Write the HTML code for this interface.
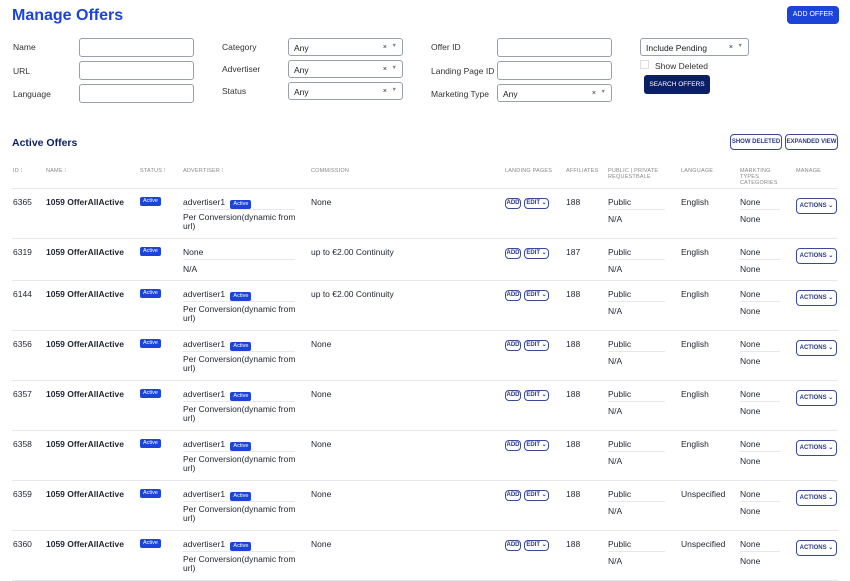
<!DOCTYPE html><html><head><meta charset="utf-8"><style>
*{box-sizing:border-box;margin:0;padding:0}
body{width:850px;height:581px;overflow:hidden;background:#fff;font-family:"Liberation Sans",sans-serif;color:#1f2430;position:relative;font-size:8.5px}
.a{position:absolute;white-space:nowrap}
.lbl{font-size:8.5px;color:#333}
.in{position:absolute;border:1px solid #9aa0ab;border-radius:3px;height:19px;width:115px;background:#fff}
.sel{position:absolute;border:1px solid #9aa0ab;border-radius:3px;height:18px;width:115px;font-size:8.5px;padding:4px 0 0 5px;color:#222}
.sel i{position:absolute;right:15px;top:5px;font-style:normal;font-size:7px}
.sel b{position:absolute;right:5px;top:4px;font-size:5.5px;color:#888;font-weight:normal}
.hd{position:absolute;top:168px;font-size:5.5px;color:#888;letter-spacing:.2px;line-height:6px}
.row{position:absolute;left:0;width:850px}
.row>div{position:absolute;white-space:nowrap}
.bd{border-top:1px solid #e6e8ee}
.bdg{background:#1c44d8;color:#fff;font-size:5.5px;border-radius:2px;padding:1px 3px;height:9px;line-height:7px;display:inline-block}
.ob{border:1px solid #3a4a9a;color:#2a3a86;border-radius:4px;font-size:6px;font-weight:bold;text-align:center;line-height:9px;height:11px}
.sep{height:1px;background:#e6e8ee}
.B{font-weight:bold}
</style></head><body>
<div class="a B" style="left:12px;top:7px;font-size:16px;color:#1c44d8">Manage Offers</div>
<div class="a" style="left:787px;top:6px;width:52px;height:18px;background:#1c44d8;border-radius:4px;color:#fff;font-size:7px;text-align:center;line-height:18px">ADD OFFER</div>
<div class="a lbl" style="left:13px;top:42px">Name</div>
<div class="a lbl" style="left:13px;top:66px">URL</div>
<div class="a lbl" style="left:13px;top:89px">Language</div>
<div class="in" style="left:79px;top:38px"></div>
<div class="in" style="left:79px;top:61px"></div>
<div class="in" style="left:79px;top:84px"></div>
<div class="a lbl" style="left:222px;top:42px">Category</div>
<div class="a lbl" style="left:222px;top:64px">Advertiser</div>
<div class="a lbl" style="left:222px;top:86px">Status</div>
<div class="sel" style="left:288px;top:38px">Any<i>×</i><b>▼</b></div>
<div class="sel" style="left:288px;top:60px">Any<i>×</i><b>▼</b></div>
<div class="sel" style="left:288px;top:82px">Any<i>×</i><b>▼</b></div>
<div class="a lbl" style="left:431px;top:42px">Offer ID</div>
<div class="a lbl" style="left:431px;top:66px">Landing Page ID</div>
<div class="a lbl" style="left:431px;top:89px">Marketing Type</div>
<div class="in" style="left:497px;top:38px"></div>
<div class="in" style="left:497px;top:61px"></div>
<div class="sel" style="left:497px;top:84px">Any<i>×</i><b>▼</b></div>
<div class="sel" style="left:640px;top:38px;width:109px">Include Pending<i>×</i><b>▼</b></div>
<div class="a" style="left:640px;top:60px;width:9px;height:9px;border:1px solid #ddd"></div>
<div class="a lbl" style="left:655px;top:61px">Show Deleted</div>
<div class="a" style="left:644px;top:75px;width:66px;height:19px;background:#0b1f66;border-radius:3px;color:#fff;font-size:6.5px;text-align:center;line-height:19px">SEARCH OFFERS</div>
<div class="a B" style="left:12px;top:137px;font-size:10.5px;color:#0b1f66">Active Offers</div>
<div class="a ob" style="left:730px;top:134px;width:52px;height:16px;line-height:14px">SHOW DELETED</div>
<div class="a ob" style="left:785px;top:134px;width:53px;height:16px;line-height:14px">EXPANDED VIEW</div>
<div class="hd" style="left:13px">ID ⁝</div>
<div class="hd" style="left:46px">NAME ⁝</div>
<div class="hd" style="left:140px">STATUS ⁝</div>
<div class="hd" style="left:183px">ADVERTISER ⁝</div>
<div class="hd" style="left:311px">COMMISSION</div>
<div class="hd" style="left:505px">LANDING PAGES</div>
<div class="hd" style="left:566px">AFFILIATES</div>
<div class="hd" style="left:608px">PUBLIC | PRIVATE<br>REQUESTBALE</div>
<div class="hd" style="left:681px">LANGUAGE</div>
<div class="hd" style="left:740px">MARKTING<br>TYPES<br>CATEGORIES</div>
<div class="hd" style="left:796px">MANAGE</div>

<div class="row" style="top:188px"><div class="bd" style="left:12px;width:826px;top:0"></div><div style="left:13px;top:9px">6365</div><div class="B" style="left:46px;top:9px">1059 OfferAllActive</div><div class="bdg" style="left:140px;top:9px">Active</div><div style="left:183px;top:9px">advertiser1 <span class="bdg" style="margin-left:3px">Active</span></div><div class="sep" style="left:183px;width:112px;top:21px"></div><div style="left:183px;top:25px;line-height:9px;white-space:normal;width:118px">Per Conversion(dynamic from url)</div><div style="left:311px;top:9px">None</div><div class="ob" style="left:505px;top:10px;width:16px">ADD</div><div class="ob" style="left:524px;top:10px;width:25px">EDIT ⌄</div><div style="left:566px;top:9px">188</div><div style="left:608px;top:9px">Public</div><div class="sep" style="left:608px;width:57px;top:21px"></div><div style="left:608px;top:26px">N/A</div><div style="left:681px;top:9px">English</div><div style="left:740px;top:9px">None</div><div class="sep" style="left:740px;width:40px;top:21px"></div><div style="left:740px;top:26px">None</div><div class="ob" style="left:796px;top:10px;width:41px;height:16px;line-height:14px">ACTIONS ⌄</div></div>

<div class="row" style="top:238px"><div class="bd" style="left:12px;width:826px;top:0"></div><div style="left:13px;top:9px">6319</div><div class="B" style="left:46px;top:9px">1059 OfferAllActive</div><div class="bdg" style="left:140px;top:9px">Active</div><div style="left:183px;top:9px">None</div><div class="sep" style="left:183px;width:112px;top:21px"></div><div style="left:183px;top:26px">N/A</div><div style="left:311px;top:9px">up to €2.00 Continuity</div><div class="ob" style="left:505px;top:10px;width:16px">ADD</div><div class="ob" style="left:524px;top:10px;width:25px">EDIT ⌄</div><div style="left:566px;top:9px">187</div><div style="left:608px;top:9px">Public</div><div class="sep" style="left:608px;width:57px;top:21px"></div><div style="left:608px;top:26px">N/A</div><div style="left:681px;top:9px">English</div><div style="left:740px;top:9px">None</div><div class="sep" style="left:740px;width:40px;top:21px"></div><div style="left:740px;top:26px">None</div><div class="ob" style="left:796px;top:10px;width:41px;height:16px;line-height:14px">ACTIONS ⌄</div></div>

<div class="row" style="top:280px"><div class="bd" style="left:12px;width:826px;top:0"></div><div style="left:13px;top:9px">6144</div><div class="B" style="left:46px;top:9px">1059 OfferAllActive</div><div class="bdg" style="left:140px;top:9px">Active</div><div style="left:183px;top:9px">advertiser1 <span class="bdg" style="margin-left:3px">Active</span></div><div class="sep" style="left:183px;width:112px;top:21px"></div><div style="left:183px;top:25px;line-height:9px;white-space:normal;width:118px">Per Conversion(dynamic from url)</div><div style="left:311px;top:9px">up to €2.00 Continuity</div><div class="ob" style="left:505px;top:10px;width:16px">ADD</div><div class="ob" style="left:524px;top:10px;width:25px">EDIT ⌄</div><div style="left:566px;top:9px">188</div><div style="left:608px;top:9px">Public</div><div class="sep" style="left:608px;width:57px;top:21px"></div><div style="left:608px;top:26px">N/A</div><div style="left:681px;top:9px">English</div><div style="left:740px;top:9px">None</div><div class="sep" style="left:740px;width:40px;top:21px"></div><div style="left:740px;top:26px">None</div><div class="ob" style="left:796px;top:10px;width:41px;height:16px;line-height:14px">ACTIONS ⌄</div></div>

<div class="row" style="top:330px"><div class="bd" style="left:12px;width:826px;top:0"></div><div style="left:13px;top:9px">6356</div><div class="B" style="left:46px;top:9px">1059 OfferAllActive</div><div class="bdg" style="left:140px;top:9px">Active</div><div style="left:183px;top:9px">advertiser1 <span class="bdg" style="margin-left:3px">Active</span></div><div class="sep" style="left:183px;width:112px;top:21px"></div><div style="left:183px;top:25px;line-height:9px;white-space:normal;width:118px">Per Conversion(dynamic from url)</div><div style="left:311px;top:9px">None</div><div class="ob" style="left:505px;top:10px;width:16px">ADD</div><div class="ob" style="left:524px;top:10px;width:25px">EDIT ⌄</div><div style="left:566px;top:9px">188</div><div style="left:608px;top:9px">Public</div><div class="sep" style="left:608px;width:57px;top:21px"></div><div style="left:608px;top:26px">N/A</div><div style="left:681px;top:9px">English</div><div style="left:740px;top:9px">None</div><div class="sep" style="left:740px;width:40px;top:21px"></div><div style="left:740px;top:26px">None</div><div class="ob" style="left:796px;top:10px;width:41px;height:16px;line-height:14px">ACTIONS ⌄</div></div>

<div class="row" style="top:380px"><div class="bd" style="left:12px;width:826px;top:0"></div><div style="left:13px;top:9px">6357</div><div class="B" style="left:46px;top:9px">1059 OfferAllActive</div><div class="bdg" style="left:140px;top:9px">Active</div><div style="left:183px;top:9px">advertiser1 <span class="bdg" style="margin-left:3px">Active</span></div><div class="sep" style="left:183px;width:112px;top:21px"></div><div style="left:183px;top:25px;line-height:9px;white-space:normal;width:118px">Per Conversion(dynamic from url)</div><div style="left:311px;top:9px">None</div><div class="ob" style="left:505px;top:10px;width:16px">ADD</div><div class="ob" style="left:524px;top:10px;width:25px">EDIT ⌄</div><div style="left:566px;top:9px">188</div><div style="left:608px;top:9px">Public</div><div class="sep" style="left:608px;width:57px;top:21px"></div><div style="left:608px;top:26px">N/A</div><div style="left:681px;top:9px">English</div><div style="left:740px;top:9px">None</div><div class="sep" style="left:740px;width:40px;top:21px"></div><div style="left:740px;top:26px">None</div><div class="ob" style="left:796px;top:10px;width:41px;height:16px;line-height:14px">ACTIONS ⌄</div></div>

<div class="row" style="top:430px"><div class="bd" style="left:12px;width:826px;top:0"></div><div style="left:13px;top:9px">6358</div><div class="B" style="left:46px;top:9px">1059 OfferAllActive</div><div class="bdg" style="left:140px;top:9px">Active</div><div style="left:183px;top:9px">advertiser1 <span class="bdg" style="margin-left:3px">Active</span></div><div class="sep" style="left:183px;width:112px;top:21px"></div><div style="left:183px;top:25px;line-height:9px;white-space:normal;width:118px">Per Conversion(dynamic from url)</div><div style="left:311px;top:9px">None</div><div class="ob" style="left:505px;top:10px;width:16px">ADD</div><div class="ob" style="left:524px;top:10px;width:25px">EDIT ⌄</div><div style="left:566px;top:9px">188</div><div style="left:608px;top:9px">Public</div><div class="sep" style="left:608px;width:57px;top:21px"></div><div style="left:608px;top:26px">N/A</div><div style="left:681px;top:9px">English</div><div style="left:740px;top:9px">None</div><div class="sep" style="left:740px;width:40px;top:21px"></div><div style="left:740px;top:26px">None</div><div class="ob" style="left:796px;top:10px;width:41px;height:16px;line-height:14px">ACTIONS ⌄</div></div>

<div class="row" style="top:480px"><div class="bd" style="left:12px;width:826px;top:0"></div><div style="left:13px;top:9px">6359</div><div class="B" style="left:46px;top:9px">1059 OfferAllActive</div><div class="bdg" style="left:140px;top:9px">Active</div><div style="left:183px;top:9px">advertiser1 <span class="bdg" style="margin-left:3px">Active</span></div><div class="sep" style="left:183px;width:112px;top:21px"></div><div style="left:183px;top:25px;line-height:9px;white-space:normal;width:118px">Per Conversion(dynamic from url)</div><div style="left:311px;top:9px">None</div><div class="ob" style="left:505px;top:10px;width:16px">ADD</div><div class="ob" style="left:524px;top:10px;width:25px">EDIT ⌄</div><div style="left:566px;top:9px">188</div><div style="left:608px;top:9px">Public</div><div class="sep" style="left:608px;width:57px;top:21px"></div><div style="left:608px;top:26px">N/A</div><div style="left:681px;top:9px">Unspecified</div><div style="left:740px;top:9px">None</div><div class="sep" style="left:740px;width:40px;top:21px"></div><div style="left:740px;top:26px">None</div><div class="ob" style="left:796px;top:10px;width:41px;height:16px;line-height:14px">ACTIONS ⌄</div></div>

<div class="row" style="top:530px"><div class="bd" style="left:12px;width:826px;top:0"></div><div style="left:13px;top:9px">6360</div><div class="B" style="left:46px;top:9px">1059 OfferAllActive</div><div class="bdg" style="left:140px;top:9px">Active</div><div style="left:183px;top:9px">advertiser1 <span class="bdg" style="margin-left:3px">Active</span></div><div class="sep" style="left:183px;width:112px;top:21px"></div><div style="left:183px;top:25px;line-height:9px;white-space:normal;width:118px">Per Conversion(dynamic from url)</div><div style="left:311px;top:9px">None</div><div class="ob" style="left:505px;top:10px;width:16px">ADD</div><div class="ob" style="left:524px;top:10px;width:25px">EDIT ⌄</div><div style="left:566px;top:9px">188</div><div style="left:608px;top:9px">Public</div><div class="sep" style="left:608px;width:57px;top:21px"></div><div style="left:608px;top:26px">N/A</div><div style="left:681px;top:9px">Unspecified</div><div style="left:740px;top:9px">None</div><div class="sep" style="left:740px;width:40px;top:21px"></div><div style="left:740px;top:26px">None</div><div class="ob" style="left:796px;top:10px;width:41px;height:16px;line-height:14px">ACTIONS ⌄</div></div>
<div class="a bd" style="left:12px;top:580px;width:826px"></div>
</body></html>
